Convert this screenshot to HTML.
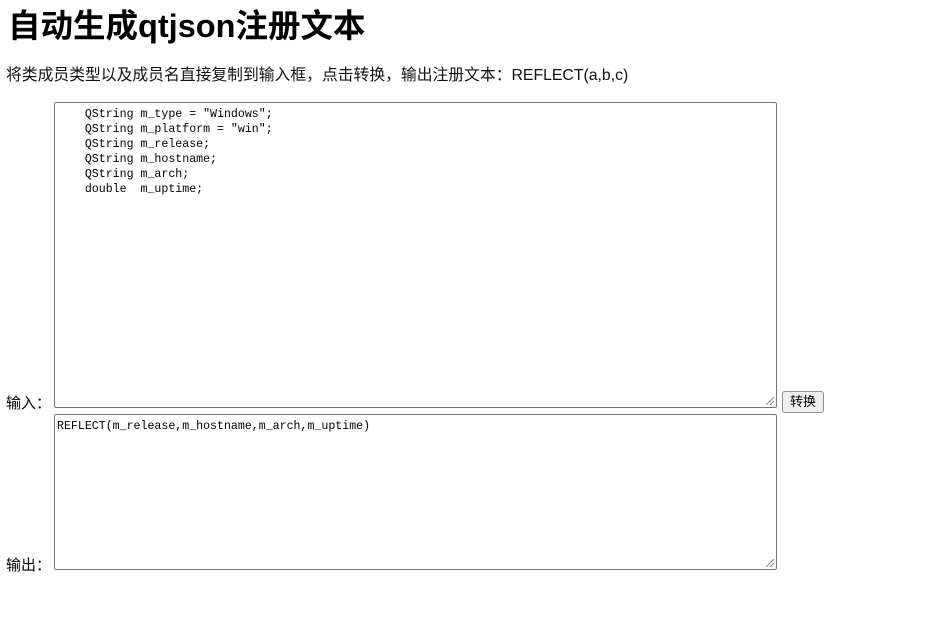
<!DOCTYPE html>
<html><head><meta charset="utf-8"><style>
body{margin:0;width:925px;height:623px;background:#fff;font-family:"Liberation Sans","Noto Sans CJK SC",sans-serif;color:#000;position:relative;overflow:hidden}
h1{position:absolute;left:8px;top:6px;margin:0;font-size:32.5px;font-weight:bold;line-height:40px}
.p{position:absolute;left:6px;top:66px;font-size:15.8px;line-height:20px;color:#111}
.ta{position:absolute;left:54px;border:1px solid #767676;border-radius:2px;font-family:"Liberation Mono","Noto Sans CJK SC",monospace;font-size:11.6px;line-height:15px;white-space:pre;padding:4px 2px;box-sizing:border-box;color:#000}
.lb{position:absolute;left:6px;font-size:15px;line-height:18px}
.btn{position:absolute;left:782px;top:391px;width:42px;height:22px;box-sizing:border-box;border:1px solid #8f8f8f;border-radius:3px;background:#efefef;font-size:13px;text-align:center;line-height:20px}
.grip{position:absolute;right:2px;bottom:2px;width:8px;height:8px;background:linear-gradient(135deg,transparent 45%,#888 45%,#888 55%,transparent 55%,transparent 70%,#888 70%,#888 80%,transparent 80%)}
</style></head><body>
<h1>自动生成qtjson注册文本</h1>
<div class="p">将类成员类型以及成员名直接复制到输入框，点击转换，输出注册文本：REFLECT(a,b,c)</div>
<div class="ta" style="top:102px;height:306px;width:723px">    QString m_type = "Windows";
    QString m_platform = "win";
    QString m_release;
    QString m_hostname;
    QString m_arch;
    double  m_uptime;<div class="grip"></div></div>
<div class="lb" style="top:395px">输入：</div>
<div class="btn">转换</div>
<div class="ta" style="top:414px;height:156px;width:723px">REFLECT(m_release,m_hostname,m_arch,m_uptime)<div class="grip"></div></div>
<div class="lb" style="top:557px">输出：</div>
</body></html>
